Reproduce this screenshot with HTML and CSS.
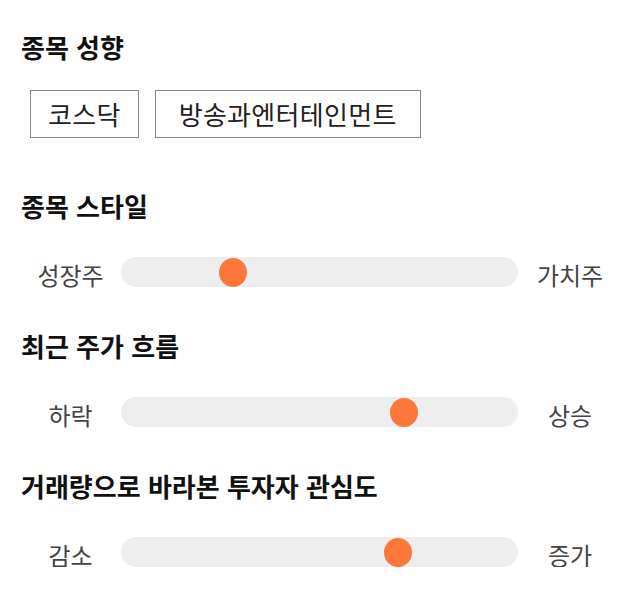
FILE: index.html
```html
<!DOCTYPE html>
<html lang="ko">
<head>
<meta charset="utf-8">
<link rel="stylesheet" href="styles.css">
</head>
<body>
<div class="page">
  <section class="section">
    <h2 class="title">종목 성향</h2>
    <div class="chips">
      <span class="chip">코스닥</span>
      <span class="chip chip-wide">방송과엔터테인먼트</span>
    </div>
  </section>
  <section class="section">
    <h2 class="title">종목 스타일</h2>
    <div class="slider-row">
      <span class="label">성장주</span>
      <div class="track"><span class="thumb" style="left: 112px"></span></div>
      <span class="label label-right">가치주</span>
    </div>
  </section>
  <section class="section">
    <h2 class="title">최근 주가 흐름</h2>
    <div class="slider-row">
      <span class="label">하락</span>
      <div class="track"><span class="thumb" style="left: 283px"></span></div>
      <span class="label label-right">상승</span>
    </div>
  </section>
  <section class="section">
    <h2 class="title">거래량으로 바라본 투자자 관심도</h2>
    <div class="slider-row">
      <span class="label">감소</span>
      <div class="track"><span class="thumb" style="left: 277px"></span></div>
      <span class="label label-right">증가</span>
    </div>
  </section>
</div>
</body>
</html>
```
FILE: styles.css
```css
* { box-sizing: border-box; }
html, body { margin: 0; padding: 0; background: #fff; }
body {
  font-family: "Noto Sans CJK KR", "Noto Sans", sans-serif;
  color: #222;
}
.page {
  padding: 33px 0 0 21px;
  display: flex;
  flex-direction: column;
}
.section { display: flex; flex-direction: column; }
.section + .section { margin-top: 45px; }
.section:first-child { margin-bottom: 9px; }
.title {
  margin: 0 0 37px;
  font-size: 26px;
  line-height: 28px;
  letter-spacing: 0;
  font-weight: 700;
  color: #111;
}
.chips {
  display: flex;
  gap: 16px;
  padding-left: 9px;
  margin-top: -8px;
}
.chip {
  height: 48px;
  border: 1px solid #888;
  padding: 0 17px;
  font-size: 26px;
  letter-spacing: 0.3px;
  line-height: 46px;
  color: #222;
}
.chip-wide { padding: 0 23px; }
.slider-row {
  display: flex;
  align-items: center;
  height: 30px;
  margin-left: -1px;
}
.label {
  width: 101px;
  text-align: center;
  font-size: 24px;
  line-height: 30px;
  color: #444;
  padding-top: 6px;
}
.label-right { width: 104px; }
.track {
  position: relative;
  width: 397px;
  height: 30px;
  background: #eee;
  border-radius: 15px;
}
.thumb {
  position: absolute;
  top: 1px;
  width: 28px;
  height: 29px;
  margin-left: -14px;
  background: #ff763b;
  border-radius: 50%;
}
```
